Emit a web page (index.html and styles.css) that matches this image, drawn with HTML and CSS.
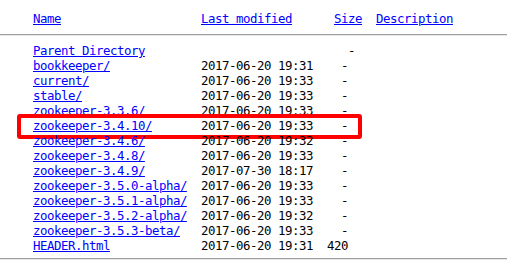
FILE: index.html
```html
<!DOCTYPE html>
<html>
<head>
<meta charset="utf-8">
<title>Index of /zookeeper</title>
<link rel="stylesheet" href="styles.css">
</head>
<body>
<div class="listing">
  <div class="head">
    <a href="#">Name</a>
    <a href="#">Last modified</a>
    <a href="#">Size</a>
    <a href="#">Description</a>
  </div>
  <div class="rule top"></div>
  <div class="rows">
    <div class="row"><a href="#">Parent Directory</a><span class="date"></span><span class="size parent">-</span></div>
    <div class="row"><a href="#">bookkeeper/</a><span class="date">2017-06-20 19:31</span><span class="size">-</span></div>
    <div class="row"><a href="#">current/</a><span class="date">2017-06-20 19:33</span><span class="size">-</span></div>
    <div class="row"><a href="#">stable/</a><span class="date">2017-06-20 19:33</span><span class="size">-</span></div>
    <div class="row"><a href="#">zookeeper-3.3.6/</a><span class="date">2017-06-20 19:33</span><span class="size">-</span></div>
    <div class="row marked"><a href="#">zookeeper-3.4.10/</a><span class="date">2017-06-20 19:33</span><span class="size">-</span><span class="highlight"></span></div>
    <div class="row"><a href="#">zookeeper-3.4.6/</a><span class="date">2017-06-20 19:32</span><span class="size">-</span></div>
    <div class="row"><a href="#">zookeeper-3.4.8/</a><span class="date">2017-06-20 19:33</span><span class="size">-</span></div>
    <div class="row"><a href="#">zookeeper-3.4.9/</a><span class="date">2017-07-30 18:17</span><span class="size">-</span></div>
    <div class="row"><a href="#">zookeeper-3.5.0-alpha/</a><span class="date">2017-06-20 19:33</span><span class="size">-</span></div>
    <div class="row"><a href="#">zookeeper-3.5.1-alpha/</a><span class="date">2017-06-20 19:33</span><span class="size">-</span></div>
    <div class="row"><a href="#">zookeeper-3.5.2-alpha/</a><span class="date">2017-06-20 19:32</span><span class="size">-</span></div>
    <div class="row"><a href="#">zookeeper-3.5.3-beta/</a><span class="date">2017-06-20 19:33</span><span class="size">-</span></div>
    <div class="row"><a href="#">HEADER.html</a><span class="date">2017-06-20 19:31</span><span class="size">420</span></div>
  </div>
  <div class="rule bottom"></div>
</div>
</body>
</html>
```

FILE: styles.css
```css
html, body {
  margin: 0;
  padding: 0;
  background: #ffffff;
}

.listing {
  font-family: "DejaVu Sans Mono", "Liberation Mono", monospace;
  font-size: 12.4px;
  letter-spacing: -0.465px;
  line-height: 15px;
  color: #000000;
  padding-top: 11px;
}

.listing a {
  color: #0000ff;
  text-decoration: underline;
}

.head {
  display: grid;
  grid-template-columns: 168px 133px 42px auto;
  padding-left: 33px;
  white-space: nowrap;
}

.rule {
  height: 0;
  border-top: 1px solid #a0a0a0;
  border-bottom: 1px solid #e6e6e6;
}

.rule.top {
  margin-top: 8px;
  margin-bottom: 7px;
}

.rule.bottom {
  margin-top: 5px;
}

.rows {
  display: flex;
  flex-direction: column;
}

.row {
  position: relative;
  display: grid;
  grid-template-columns: 168px 112px 42px;
  padding-left: 33px;
  height: 15px;
  white-space: nowrap;
}

.size {
  text-align: right;
  padding-right: 7px;
}

.size.parent {
  padding-right: 0;
}

.highlight {
  position: absolute;
  left: 17px;
  top: -4px;
  width: 345px;
  height: 25px;
  box-sizing: border-box;
  border: 4px solid #ff0000;
  border-radius: 3px;
  pointer-events: none;
}
```
